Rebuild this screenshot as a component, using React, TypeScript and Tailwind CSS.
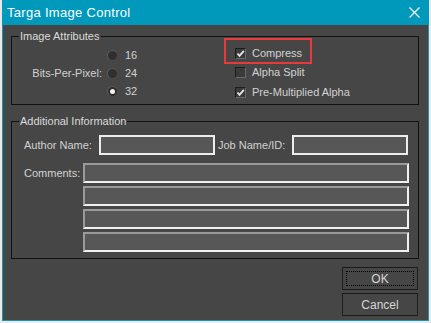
const font = { fontFamily: '"Liberation Sans", Arial, sans-serif' }

const CheckBox = ({ checked }: { checked: boolean }) => (
    <span className="w-[11px] h-[11px] flex items-center justify-center bg-[#3a3a3a] border border-t-[#1c1c1c] border-l-[#1c1c1c] border-r-[#6a6a6a] border-b-[#6a6a6a]">
        {checked && (
            <svg width="9" height="9" viewBox="0 0 9 9">
                <path d="M1.5 4.5 L3.5 6.8 L7.8 1.8" stroke="#e8e8e8" strokeWidth="1.8" fill="none" />
            </svg>
        )}
    </span>
)

const Radio = ({ checked }: { checked: boolean }) => (
    <span className="w-[11px] h-[11px] rounded-full flex items-center justify-center bg-[#2f2f2f] border-[1.5px] border-t-[#5a5a5a] border-l-[#5a5a5a] border-r-[#4a4a4a] border-b-[#4a4a4a]">
        {checked && <span className="w-[5px] h-[5px] rounded-full bg-[#f2f2f2]" />}
    </span>
)

const Field = ({ className }: { className: string }) => (
    <div className={"h-[20px] bg-[#575757] border-2 " + className} />
)

export default function App() {
    return (
        <div className="w-[431px] h-[323px] bg-[#e9e9e9] overflow-hidden" style={font}>
            <div className="ml-[2px] w-[427px] h-[321px] border border-[#1598b8] bg-[#464646] flex flex-col">
                <div className="h-[25px] bg-[#0099bb] flex items-center justify-between pl-[5px] pr-[9px] -mt-px -mx-px">
                    <span className="text-white text-[13px] tracking-[0.3px]">Targa Image Control</span>
                    <svg width="11" height="11" viewBox="0 0 11 11">
                        <path d="M0.5 0.5 L10.5 10.5 M10.5 0.5 L0.5 10.5" stroke="#fff" strokeWidth="1.2" />
                    </svg>
                </div>

                <div className="px-[8px] flex flex-col">
                    <fieldset className="mt-[4px] w-[408px] h-[76px] border border-[#111] text-[11px] text-[#d2d2d2]">
                        <legend className="ml-[7px] px-[1px] leading-[14px] text-[#dadada]">Image Attributes</legend>
                        <div className="flex">
                            <div className="w-[223px] pl-[20px] pt-[2px] flex items-center">
                                <span className="w-[70px] text-right">Bits-Per-Pixel:</span>
                                <div className="ml-[5px] flex flex-col">
                                    {["16", "24", "32"].map(v => (
                                        <div key={v} className="h-[18px] flex items-center gap-[7px]">
                                            <Radio checked={v === "32"} />
                                            <span>{v}</span>
                                        </div>
                                    ))}
                                </div>
                            </div>
                            <div className="flex flex-col pt-[1px]">
                                <div className="relative h-[19px] flex items-center gap-[6px]">
                                    <CheckBox checked={true} />
                                    <span>Compress</span>
                                    <div className="absolute -left-[11px] -top-[6px] w-[88px] h-[26px] border-2 border-[#e8393c]" />
                                </div>
                                <div className="h-[19px] flex items-center gap-[6px]">
                                    <CheckBox checked={false} />
                                    <span>Alpha Split</span>
                                </div>
                                <div className="h-[20px] flex items-center gap-[6px]">
                                    <CheckBox checked={true} />
                                    <span>Pre-Multiplied Alpha</span>
                                </div>
                            </div>
                        </div>
                    </fieldset>

                    <fieldset className="mt-[9px] w-[408px] h-[145px] border border-[#111] text-[11px] text-[#d2d2d2]">
                        <legend className="ml-[7px] px-[1px] leading-[14px] text-[#dadada]">Additional Information</legend>
                        <div className="mt-[7px] pl-[12px] flex items-center">
                            <span className="w-[75px]">Author Name:</span>
                            <Field className="w-[116px] border-[#ececec]" />
                            <span className="ml-[3px] w-[74px]">Job Name/ID:</span>
                            <Field className="w-[116px] border-[#ececec]" />
                        </div>
                        <div className="mt-[8px] pl-[12px] flex">
                            <span className="w-[59px] h-[20px] flex items-center">Comments:</span>
                            <div className="w-[326px] flex flex-col gap-[3px]">
                                <Field className="border-t-[#9a9a9a] border-l-[#9a9a9a] border-r-[#f0f0f0] border-b-[#f0f0f0]" />
                                <Field className="border-t-[#9a9a9a] border-l-[#9a9a9a] border-r-[#f0f0f0] border-b-[#f0f0f0]" />
                                <Field className="border-t-[#9a9a9a] border-l-[#9a9a9a] border-r-[#f0f0f0] border-b-[#f0f0f0]" />
                                <Field className="border-t-[#9a9a9a] border-l-[#9a9a9a] border-r-[#f0f0f0] border-b-[#f0f0f0]" />
                            </div>
                        </div>
                    </fieldset>

                    <div className="mt-[8px] ml-[331px] flex flex-col gap-[3px]">
                        <button className="w-[76px] h-[23px] border border-[#1c1c1c] p-[3px] text-[12px] text-[#d6d6d6]">
                            <span className="w-full h-full flex items-center justify-center border border-dotted border-black">OK</span>
                        </button>
                        <button className="w-[76px] h-[23px] border border-[#1c1c1c] text-[12px] text-[#d6d6d6] flex items-center justify-center">Cancel</button>
                    </div>
                </div>
            </div>
        </div>
    )
}
